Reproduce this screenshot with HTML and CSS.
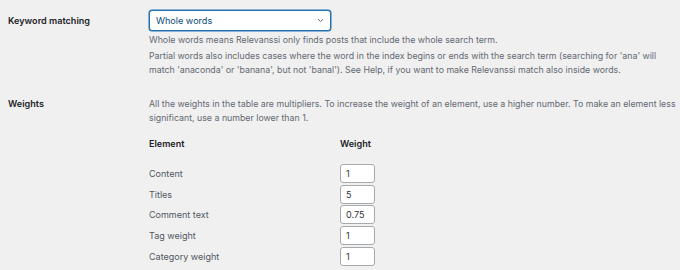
FILE: index.html
```html
<!DOCTYPE html>
<html lang="en">
<head>
<meta charset="utf-8">
<title>Relevanssi settings</title>
<link rel="stylesheet" href="styles.css">
</head>
<body>
<div class="settings">
  <div class="row row-keyword">
    <div class="label">Keyword matching</div>
    <div class="field">
      <div class="select">
        <span class="select-text">Whole words</span>
        <svg class="chevron" width="7" height="5" viewBox="0 0 7 5"><path d="M1 1.2 L3.5 3.6 L6 1.2" fill="none" stroke="#6b7075" stroke-width="1"/></svg>
      </div>
      <p class="desc desc-first">Whole words means Relevanssi only finds posts that include the whole search term.</p>
      <p class="desc">Partial words also includes cases where the word in the index begins or ends with the search term (searching for 'ana' will match 'anaconda' or 'banana', but not 'banal'). See Help, if you want to make Relevanssi match also inside words.</p>
    </div>
  </div>
  <div class="row row-weights">
    <div class="label">Weights</div>
    <div class="field">
      <p class="desc">All the weights in the table are multipliers. To increase the weight of an element, use a higher number. To make an element less significant, use a number lower than 1.</p>
      <div class="weights">
        <div class="whead">Element</div><div class="whead">Weight</div>
        <div class="wname">Content</div><div class="wval"><span class="input">1</span></div>
        <div class="wname">Titles</div><div class="wval"><span class="input">5</span></div>
        <div class="wname">Comment text</div><div class="wval"><span class="input">0.75</span></div>
        <div class="wname">Tag weight</div><div class="wval"><span class="input">1</span></div>
        <div class="wname">Category weight</div><div class="wval"><span class="input">1</span></div>
      </div>
    </div>
  </div>
</div>
</body>
</html>
```

FILE: styles.css
```css
html, body {
  margin: 0;
  padding: 0;
  background: #f0f0f1;
}
body {
  font-family: Inter, "Noto Sans", sans-serif;
  font-size: 8.8px;
  color: #3c434a;
  width: 680px;
  height: 270px;
  overflow: hidden;
}
.settings {
  padding: 10px 4px 0 8px;
}
.row {
  display: grid;
  grid-template-columns: 141px 1fr;
}
.label {
  font-size: 9.1px;
  font-weight: 600;
  color: #1d2327;
  line-height: 21px;
}
.row-weights {
  margin-top: 21px;
}
.row-weights .label {
  line-height: 14px;
}
.select {
  width: 182px;
  height: 21px;
  box-sizing: border-box;
  border: 1px solid #2271b1;
  box-shadow: 0 0 0 0.5px #2271b1;
  border-radius: 3px;
  background: #fff;
  display: flex;
  align-items: center;
  justify-content: space-between;
  padding: 0 6px 0 6px;
}
.select-text {
  color: #0a4b78;
  font-size: 9.1px;
}
.chevron {
  display: block;
}
.desc {
  margin: 0;
  color: #646970;
  line-height: 13.8px;
}
.desc-first {
  margin-top: 2px;
  margin-bottom: 2px;
}
.weights {
  display: grid;
  grid-template-columns: 191px 36px;
  grid-template-rows: 26px;
  grid-auto-rows: 20.7px;
  margin-top: 12px;
  align-items: center;
}
.whead {
  font-weight: 600;
  font-size: 9.05px;
  color: #1d2327;
  line-height: 14px;
  align-self: start;
}
.wname {
  color: #50575e;
  font-size: 9px;
}
.input {
  display: block;
  box-sizing: border-box;
  width: 35px;
  height: 19px;
  border: 1px solid #a7aaad;
  border-radius: 3px;
  background: #fff;
  color: #2c3338;
  font-size: 9px;
  line-height: 17px;
  padding-left: 5px;
}
```
